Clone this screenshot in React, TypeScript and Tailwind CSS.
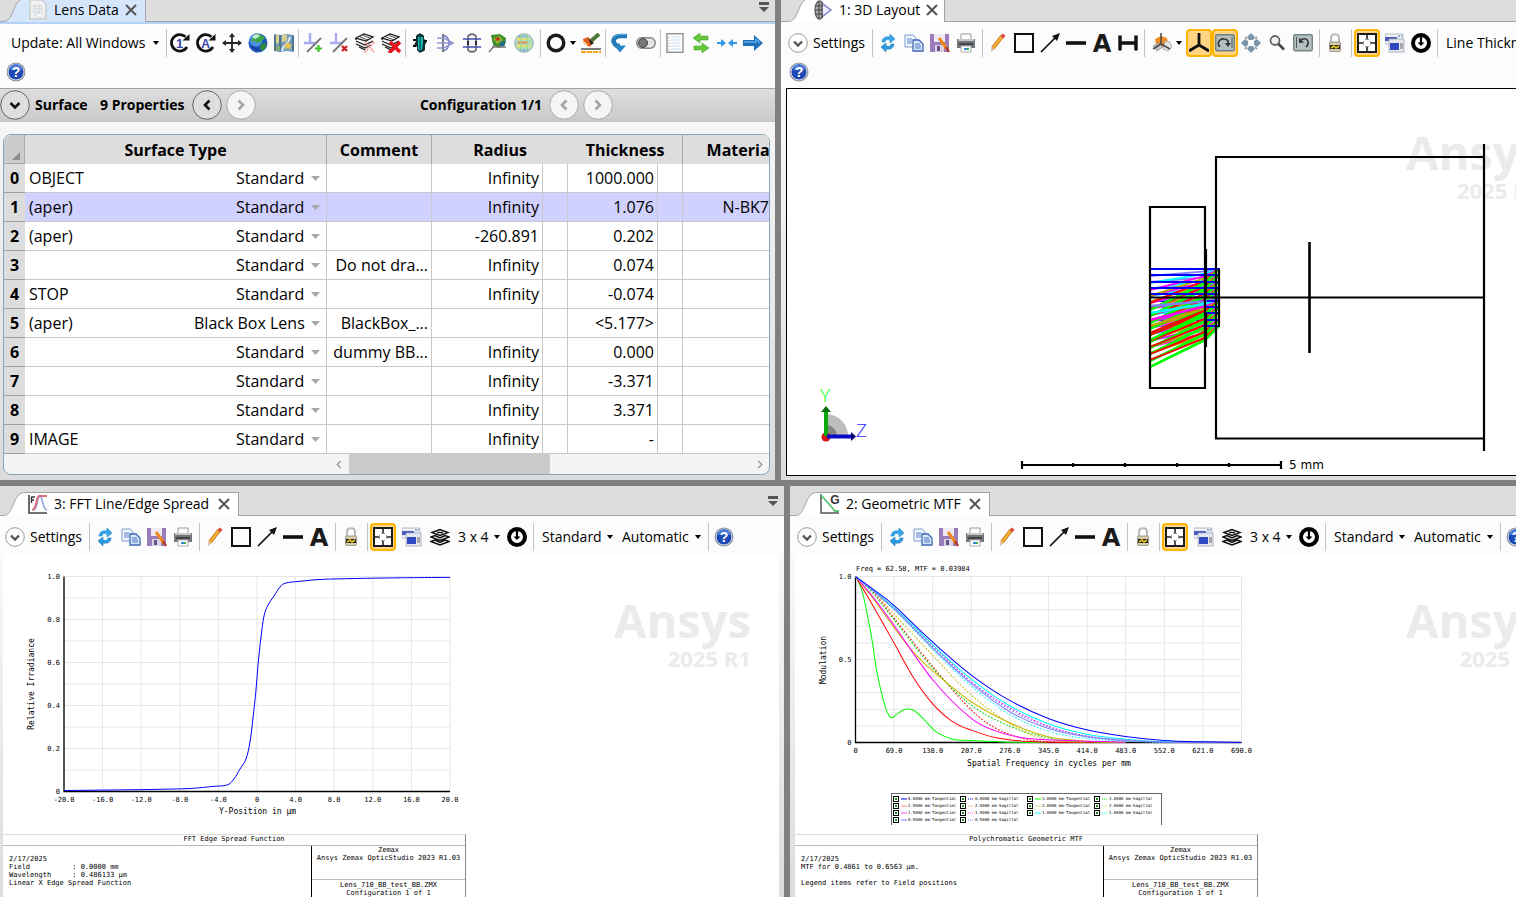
import React from 'react'
import clsx from 'clsx'

/* ---------- icons, all on a 20 x 20 grid ---------- */

const Svg = ({ children, className }: { children: React.ReactNode; className?: string }) => (
	<svg viewBox="0 0 20 20" className={clsx('w-5 h-5 shrink-0', className)} fill="none" aria-hidden="true">{children}</svg>
)

const Caret: React.FC<{ className?: string }> = ({ className }) => (
	<svg viewBox="0 0 6 4" className={clsx('w-[6px] h-1 pointer-events-none', className)} aria-hidden="true"><path d="M0 0h6L3 4z" fill="currentColor" /></svg>
)

const rotateRing = (
	<g>
		<path d="M17 14A8.300 8.300 0 1 1 15.500 3.800" stroke="#111" strokeWidth="2.800" />
		<path d="M12.500 7.500h7V1z" fill="#111" />
	</g>
)

const layers = (
	<g stroke="#1a1a1a" strokeWidth="1.300">
		<path d="M1 5l8-4 9 3-7 4z" fill="#fff" />
		<path d="M1 8l2 1 7 3 8-4M1 11l9 4 6-3M1 5v2M4 14l6 3" />
		<path d="M5 4l8 3M8 2.500l7 2.500" strokeWidth="0.800" />
	</g>
)

const axes = (
	<g>
		<path d="M1 10h13M7 0v10" stroke="#a9aaf0" strokeWidth="2.400" />
		<path d="M4 19L18 5" stroke="#777" strokeWidth="1.800" />
	</g>
)

const icons = {
	update1: (
		<Svg>
			{rotateRing}
			<text x="9.500" y="14.500" textAnchor="middle" className="font-['Liberation_Sans'] text-[13px] font-bold" fill="#3a46a8">1</text>
		</Svg>
	),
	updateAll: (
		<Svg>
			{rotateRing}
			<text x="9.500" y="14.500" textAnchor="middle" className="font-['Liberation_Sans'] text-[12px] font-bold" fill="#3a46a8">A</text>
		</Svg>
	),
	move: (
		<Svg>
			<path d="M10 2v16M2 10h16" stroke="#222" strokeWidth="1.800" />
			<path d="M10 0l3 4h-6zM10 20l3-4h-6zM0 10l4-3v6zM20 10l-4-3v6z" fill="#222" />
		</Svg>
	),
	globe: (
		<Svg>
			<circle cx="10" cy="10" r="9.500" fill="#1c57b8" />
			<circle cx="8" cy="7" r="6.500" fill="#4f94e4" />
			<path d="M9 1c3 0 7 2 8 5l-3 1-1 2-4 1-2-2-4 1c1-4 3-7 6-8z" fill="#3fa648" />
			<path d="M13 11l5-1c1 3-1 6-4 8l-2-3z" fill="#2f8a35" />
			<path d="M4 4c2-3 6-3 8-1L7 6z" fill="#c9f0d0" />
			<path d="M4 13c2 3 5 4 7 4" stroke="#1a3f92" strokeWidth="2" />
		</Svg>
	),
	map: (
		<Svg>
			<path d="M0 1l6 1 7-1 7 1v17l-7-1-7 1-6-1z" fill="#6f9cc0" />
			<path d="M2 1.500l3 .5v9l-3-1zM8 2l5-.500v6l-5 2z" fill="#d7d28c" />
			<path d="M8 18c0-6 7-6 8-14" stroke="#e9f1f6" strokeWidth="1.800" />
			<path d="M1 2v16M6 2v17M19 3v15" stroke="#3c5a74" strokeWidth="1.200" />
			<path d="M14 8l1.500 3 3 .5-2 2 .5 3-3-1.500-3 1.500.5-3-2-2 3-.5z" fill="#e8c25a" />
			<path d="M2 13h4v5H2z" fill="#86aa76" />
		</Svg>
	),
	axesAdd: (
		<Svg>
			{axes}
			<path d="M15.500 12v7M12 15.500h7" stroke="#3cc72b" strokeWidth="2.200" />
		</Svg>
	),
	axesDel: (
		<Svg>
			{axes}
			<path d="M13 13l5 5M18 13l-5 5" stroke="#d02424" strokeWidth="2.400" />
		</Svg>
	),
	layersHide: (
		<Svg>
			{layers}
			<path d="M10 9l9 10M19 9L9 20" stroke="#f2a0a0" strokeWidth="2.200" strokeDasharray="2 1" />
		</Svg>
	),
	layersDel: (
		<Svg>
			{layers}
			<path d="M9 9l10 10M19 9L8 20" stroke="#e8141c" strokeWidth="3.600" />
		</Svg>
	),
	element: (
		<Svg>
			<path d="M6 3c2-3 6-3 8 0v3l3 2-2 4v5c-3 3-6 3-8 0v-3l-3-2 2-4z" fill="#0e2f33" />
			<path d="M8 4h5v5l-1 8H8V9z" fill="#19b9b4" />
			<path d="M10 0v20" stroke="#08474a" strokeWidth="1.200" />
			<path d="M3 7h3M3 13h3M14 8h3" stroke="#111" strokeWidth="2" />
		</Svg>
	),
	lensHalf: (
		<Svg>
			<path d="M7 1v18" stroke="#444" strokeWidth="1.400" />
			<path d="M7 2c4 1 6 4 6 8s-2 7-6 8" stroke="#6a78bf" strokeWidth="1.300" />
			<path d="M1 5h7l9 5-9 5H1M1 10h16" stroke="#8e98d4" strokeWidth="1.500" />
		</Svg>
	),
	lensFull: (
		<Svg>
			<path d="M6 3c2-2.500 6-2.500 8 0v14c-2 2.500-6 2.500-8 0z" fill="#f4f4f4" stroke="#666" strokeWidth="1.600" />
			<path d="M1 6h18M1 14h18" stroke="#3f4fb4" strokeWidth="1.600" />
			<path d="M6 8v4M14 8v4" stroke="#222" strokeWidth="1.800" />
		</Svg>
	),
	surfacePlot: (
		<Svg>
			<path d="M3 2l9-1 6 4-1 7-6 3-6-3z" fill="#3f8f2c" />
			<path d="M5 5l7-2 3 4-6 4z" fill="#8db52b" />
			<path d="M7 5l4-1 1 3-3 1z" fill="#c8341c" />
			<path d="M12 9l6-1-2 5-4 1z" fill="#1f6d86" />
			<path d="M1 19l6-7M4 14h14" stroke="#777" strokeWidth="1.500" />
		</Svg>
	),
	wavefront: (
		<Svg>
			<circle cx="10" cy="10" r="9.300" fill="#a9dcc0" stroke="#9aa8b5" />
			<path d="M3 6h13M3 13h14" stroke="#ece35e" strokeWidth="2.400" strokeDasharray="3 1" />
			<path d="M4 10c3-2 6 1 10-1" stroke="#f07a4a" strokeWidth="1.600" />
			<path d="M4 3.500h10M6 17h9" stroke="#86a8ea" strokeWidth="2" strokeDasharray="2 1" />
			<path d="M7 2v16M13 2v16" stroke="#8fd687" strokeWidth="1" />
		</Svg>
	),
	aperture: <Svg><circle cx="10" cy="10" r="7.800" stroke="#1a1a1a" strokeWidth="3.400" /></Svg>,
	pickup: (
		<Svg>
			<path d="M18 1l-8 7" stroke="#4b7a35" strokeWidth="4" />
			<path d="M2 6l5-2 5 5-3 5-6-3z" fill="#e2641c" />
			<path d="M7 5l6 5-3 2z" fill="#222" />
			<path d="M2 9l4 3" stroke="#f8d9a8" strokeWidth="1.600" />
			<path d="M0 16h20" stroke="#222" strokeWidth="1.200" />
			<path d="M0 19h20" stroke="#f0a81e" strokeWidth="2" strokeDasharray="5 1" />
		</Svg>
	),
	undo: (
		<Svg>
			<path d="M17 3H10C4 3 2 8 5 11c1 2 3 2 5 2" stroke="#2279b8" strokeWidth="4.600" />
			<path d="M4 12.500h12l-6 7z" fill="#2b86c6" />
			<path d="M16 1.500h-6c-4 0-6 2-6.500 4" stroke="#5fb0e4" strokeWidth="1" />
		</Svg>
	),
	toggle: (
		<Svg>
			<rect x="0.800" y="4.800" width="18.400" height="10.400" rx="5" fill="#e4e4e4" stroke="#888" strokeWidth="1.500" />
			<circle cx="7" cy="10" r="4.500" fill="#777" stroke="#444" />
		</Svg>
	),
	notes: (
		<Svg>
			<rect x="2" y="0.700" width="16" height="18.600" fill="#fff" stroke="#8f8f8f" strokeWidth="1.400" />
			<path d="M6 4h10M6 7h10M6 10h10M6 13h10M6 16h10" stroke="#c6dbee" />
			<path d="M4 4v13" stroke="#999" strokeDasharray="1 2" />
		</Svg>
	),
	swap: (
		<Svg>
			<path d="M2 5l7-5v3h8v4H9v3zM18 15l-7-5v3H3v4h8v3z" fill="#63c83e" stroke="#4aa52c" strokeWidth="0.600" />
		</Svg>
	),
	inward: (
		<Svg>
			<path d="M0 9h4V6l5 4-5 4v-3H0zM20 9h-4V6l-5 4 5 4v-3h4z" fill="#2f96e8" />
		</Svg>
	),
	goRight: (
		<Svg>
			<path d="M0 7h11V2l9 8-9 8v-5H0z" fill="#1f6fb8" />
			<path d="M1 9h12V6l4 4" stroke="#58aef0" strokeWidth="1.300" />
		</Svg>
	),
	help: (
		<Svg>
			<circle cx="10" cy="10" r="9.500" fill="#8d939c" />
			<circle cx="10" cy="10" r="8" fill="#1f49b4" stroke="#d5dcec" strokeWidth="1" />
			<path d="M4 8a6 6 0 0 1 12 0z" fill="#4b78da" />
			<text x="10" y="15" textAnchor="middle" className="font-['Liberation_Sans'] text-[14px] font-bold" fill="#fff">?</text>
		</Svg>
	),
	refresh: (
		<Svg>
			<path d="M4 9c0-4 4-6 8-5V1l5 5-5 4V7c-3-1-5 0-5 2z" fill="#35a7e8" stroke="#2488cc" strokeWidth="0.600" />
			<path d="M16 11c0 4-4 6-8 5v3l-5-5 5-4v3c3 1 5 0 5-2z" fill="#2c9be0" stroke="#1e7cc0" strokeWidth="0.600" />
		</Svg>
	),
	copy: (
		<Svg>
			<path d="M1 2h8l3 3v9H1z" fill="#f1f6fd" stroke="#7e9cd0" />
			<path d="M3 6h5M3 8h5M3 10h5" stroke="#5f86cf" />
			<path d="M9 7h6l4 4v7H9z" fill="#dbe8fa" stroke="#3d66b5" strokeWidth="1.300" />
			<path d="M11 11h5M11 13h6M11 15h6" stroke="#4a76c8" />
		</Svg>
	),
	save: (
		<Svg>
			<path d="M0 1h19v18H0z" fill="#9a7cba" />
			<path d="M4 1h11v8H4z" fill="#efeaf5" />
			<path d="M5 12h9v7H5z" fill="#d8d3de" />
			<path d="M7 13h3v5H7z" fill="#6b4f8c" />
			<path d="M9 5l8 11" stroke="#f08a1c" strokeWidth="3" />
			<path d="M16 14l3 5" stroke="#b02c1c" strokeWidth="2" />
		</Svg>
	),
	print: (
		<Svg>
			<path d="M5 1h10v6H5z" fill="#fff" stroke="#999" />
			<path d="M1 6h18v9H1z" fill="#73777b" />
			<path d="M2 6h16v2H2z" fill="#c3c6c8" />
			<path d="M3 11h14" stroke="#333" strokeWidth="1.500" />
			<path d="M5 13h10v6H5z" fill="#fff" stroke="#aaa" />
			<path d="M8 15h3v2H8z" fill="#2f8ad0" />
			<path d="M11 15h2v2h-2z" fill="#49b04a" />
		</Svg>
	),
	pencil: (
		<Svg>
			<path d="M5 15L14 3.500" stroke="#c77a12" strokeWidth="4" />
			<path d="M5 15L14 3.500" stroke="#f7b03a" strokeWidth="2.400" />
			<path d="M12.500 3l2-2.500 3 2-2 3z" fill="#d8473a" />
			<path d="M3 19l.500-5 3 2z" fill="#d8b489" />
		</Svg>
	),
	rect: <Svg><rect x="1" y="1" width="18" height="18" stroke="#111" strokeWidth="2" /></Svg>,
	arrow: (
		<Svg>
			<path d="M1 19L16 4" stroke="#111" strokeWidth="1.700" />
			<path d="M20 0l-3 8-5-5z" fill="#111" />
		</Svg>
	),
	line: <Svg><path d="M0 10h20" stroke="#111" strokeWidth="3.600" /></Svg>,
	text: (
		<Svg>
			<text x="10" y="18.500" textAnchor="middle" className="font-['DejaVu_Sans'] text-[24px] font-bold" fill="#1a1a1a">A</text>
		</Svg>
	),
	dimension: <Svg><path d="M2 2.500v15M18 2.500v15M2 10h16" stroke="#111" strokeWidth="3.400" /></Svg>,
	cube: (
		<Svg>
			<path d="M3 6l6-3 6 2 1 5-5 4-7-2z" fill="#f08a24" />
			<path d="M1 13l6-3 4 4-6 4z" fill="#c4c4c4" stroke="#888" strokeWidth="0.700" />
			<path d="M13 8l5 1 2 5-4 4-5-2z" fill="#e2e2e2" stroke="#999" strokeWidth="0.700" />
			<path d="M9 0v11l9 5M9 11l-8 5" stroke="#4a4a4a" strokeWidth="1.500" />
		</Svg>
	),
	triad: <Svg><path d="M10 0v13M10 12L0 18M10 12l10 6" stroke="#111" strokeWidth="2.800" /></Svg>,
	rotateView: (
		<Svg>
			<rect x="0.700" y="1.700" width="18.600" height="16" rx="1.500" fill="#b3bfbf" stroke="#6f8080" strokeWidth="1.400" />
			<path d="M5 14c-4-4 0-9 4-8 3 0 5 2 4 5" stroke="#333" strokeWidth="1.600" />
			<path d="M10 10h6l-3 4z" fill="#333" />
			<path d="M17 4v11" stroke="#555" />
		</Svg>
	),
	pan: (
		<Svg>
			<path d="M10 0l4 4-2 3H8L6 4zM10 20l4-4-2-3H8l-2 3zM0 10l4-4 3 2v4l-3 2zM20 10l-4-4-3 2v4l3 2z" fill="#7d95a8" />
			<path d="M4 4l2 2M16 4l-2 2M4 16l2-2M16 16l-2-2" stroke="#7f8f9e" strokeWidth="1.400" />
			<circle cx="10" cy="10" r="2.500" fill="#fff" />
		</Svg>
	),
	zoom: (
		<Svg>
			<circle cx="8" cy="7.500" r="4.500" fill="#f1f1f1" stroke="#666" strokeWidth="1.800" />
			<path d="M11.500 11l5.500 5.500" stroke="#444" strokeWidth="2.600" />
		</Svg>
	),
	resetView: (
		<Svg>
			<rect x="0.700" y="1.700" width="18.600" height="16" rx="1.500" fill="#b4c0c0" stroke="#738484" strokeWidth="1.400" />
			<path d="M8 7c5-4 10 2 5 7" stroke="#333" strokeWidth="1.600" />
			<path d="M6 10V4.500l5 5z" fill="#333" />
			<path d="M3.500 4v11" stroke="#555" />
		</Svg>
	),
	lock: (
		<Svg>
			<path d="M6 9V5c0-5 8-5 8 0v4" stroke="#b9b9b9" strokeWidth="2" />
			<rect x="4.500" y="9" width="11" height="9.500" rx="1" fill="#d4cda6" stroke="#888" strokeWidth="0.800" />
			<path d="M5 12h10v4H5z" fill="#222" />
			<path d="M6 15l3-2 2 2 3-2" stroke="#f2cf1a" strokeWidth="1.600" />
		</Svg>
	),
	fitWindow: (
		<Svg>
			<rect x="1" y="1" width="18" height="18" fill="#fff" stroke="#1c1c1c" strokeWidth="2" />
			<path d="M10 2v4.500M10 13.500V18M2 10h4.500M13.500 10H18" stroke="#222" strokeWidth="1.600" />
			<path d="M8 6.500h4M8 13.500h4M6.500 8v4M13.500 8v4" stroke="#999" />
		</Svg>
	),
	windows: (
		<Svg>
			<path d="M0 1h18v10H0z" fill="#eef1f8" stroke="#a5aec0" strokeWidth="0.800" />
			<path d="M0 4h12v4H0z" fill="#4a5cc0" />
			<path d="M13 3h2M16 3h1" stroke="#7f98b8" strokeWidth="1.500" />
			<path d="M4 6h15v13H4z" fill="#e6e9f0" stroke="#9aa1ad" strokeWidth="0.800" />
			<path d="M5 10h9v7H5z" fill="#2f49c0" />
			<path d="M15 10h3v6h-3z" fill="#a8a8a8" />
		</Svg>
	),
	clock: (
		<Svg>
			<circle cx="10" cy="10" r="8" fill="#fff" stroke="#000" strokeWidth="4" />
			<path d="M10 4v7" stroke="#000" strokeWidth="2.200" />
			<path d="M6.500 9.500L10 13l3.500-3.500z" fill="#000" />
		</Svg>
	),
	stack: (
		<Svg>
			<path d="M2 5.500l8-3 8 3-8 3zM1 10l4-1.500L10 11l5-2.500L19 10l-9 3.500zM1 14.500L5 13l5 2.500 5-2.500 4 1.500L10 18z" stroke="#111" strokeWidth="1.500" />
			<path d="M7 5.500h6" stroke="#111" strokeWidth="1.500" />
		</Svg>
	),
	doc: (
		<Svg>
			<path d="M2 0h12l4 4v15H2z" fill="#f2f2f2" stroke="#bdbdbd" />
			<path d="M4 6h11M4 9h11M4 12h11M7 4v12M11 4v12" stroke="#d0d5da" />
			<path d="M8 17c0-3 3-4 5-2 2-1 4 0 4 2z" fill="#fff" stroke="#c4cdd6" strokeWidth="0.600" />
		</Svg>
	),
	lensTab: (
		<Svg>
			<ellipse cx="6.500" cy="10" rx="4.500" ry="9.200" fill="#a8a8a8" stroke="#555" strokeWidth="1.200" />
			<path d="M6 1v18M2 6h8M2 14h8M2 10h8M9 2v16" stroke="#444" />
			<path d="M10 4l8 6-8 6" fill="#eef0ff" stroke="#8c90d8" strokeWidth="1.600" />
		</Svg>
	),
	fftTab: (
		<Svg>
			<path d="M1 1v18h18" stroke="#444" strokeWidth="1.600" />
			<path d="M3 3h4M3.500 3v6M3 6h3" stroke="#333" strokeWidth="1.400" />
			<path d="M6 16c3 0 3-13 6-14 3 0 2 13 7 14" stroke="#9aaee4" strokeWidth="1.800" />
			<path d="M4 16c5 0 4-14 7-14h8" stroke="#dc6c78" strokeWidth="2" />
		</Svg>
	),
	mtfTab: (
		<Svg>
			<path d="M1 0v19h18" stroke="#555" strokeWidth="1.500" />
			<path d="M1 1l14 16h4" stroke="#5cc47a" strokeWidth="1.800" />
			<text x="15" y="10" textAnchor="middle" className="font-['Liberation_Sans'] text-[12px] font-bold" fill="#333">G</text>
		</Svg>
	),
}

type IconName = keyof typeof icons

/* ---------- shared controls ---------- */

const ToolButton: React.FC<{ icon: IconName; active?: boolean }> = ({ icon, active }) => (
	<button
		aria-label={icon}
		className={clsx('w-[26px] h-7 shrink-0 flex items-center justify-center rounded-sm', active && 'bg-[#ffd484] border-2 border-[#ffb400]')}
	>
		{icons[icon]}
	</button>
)

const ToolGroup: React.FC<{ list: IconName[] }> = ({ list }) => <>{list.map((i) => <ToolButton key={i} icon={i} />)}</>

const Sep: React.FC<{ narrow?: boolean }> = ({ narrow }) => (
	<div className={clsx('h-7 shrink-0 flex justify-center', narrow ? 'w-[3px]' : 'w-[6px]')}>
		<div className="w-px bg-[#c4c4c4]"></div>
	</div>
)

const ToolSelect: React.FC<{ label: string; value: string; className: string }> = ({ label, value, className }) => (
	<label className={clsx('grid items-center shrink-0', className)}>
		<select aria-label={label} className="col-start-1 row-start-1 w-full appearance-none bg-transparent outline-none">
			<option>{value}</option>
		</select>
		<Caret className="col-start-1 row-start-1 justify-self-end" />
	</label>
)

const SettingsButton: React.FC = () => (
	<button className="flex items-center shrink-0 w-[81px] gap-[5px] text-left">
		<svg viewBox="0 0 20 20" className="w-5 h-5 shrink-0" fill="none" aria-hidden="true">
			<circle cx="10" cy="10" r="9.300" fill="#fff" stroke="#999" />
			<path d="M6 8.500l4 4 4-4" stroke="#555" strokeWidth="2.400" />
		</svg>
		Settings
	</button>
)

type TabBarProps = { title: string; icon: IconName; indent?: string; width: string; blue?: boolean; menu?: boolean; top?: boolean }

const TabBar: React.FC<TabBarProps> = ({ title, icon, indent, width, blue, menu, top }) => (
	<div className={clsx('flex items-end overflow-hidden bg-[#dddddd] shrink-0', top ? 'h-[22px]' : 'h-[30px]')}>
		<div className={clsx('shrink-0 self-stretch border-b border-[#a3a3a3]', indent ?? 'w-0')}></div>
		<div className={clsx('h-6 shrink-0 flex items-center', width)}>
			<svg viewBox="0 0 28 24" className="w-7 h-6 shrink-0" aria-hidden="true">
				<path d="M0 24V23.500H3C9 23.500 11 18 14 11S19 .5 26 .5H28V24z" fill={blue ? '#d5e5fa' : '#ffffff'} />
				<path d="M0 23.500H3C9 23.500 11 18 14 11S19 .5 26 .5H28" fill="none" stroke="#a3a3a3" />
			</svg>
			<div className={clsx('flex-1 h-full min-w-0 flex items-center gap-[6px] border-t border-r border-[#a3a3a3] pr-2 pb-[2px]', blue ? 'bg-[#d5e5fa]' : 'bg-white')}>
				{icons[icon]}
				<span className="whitespace-nowrap">{title}</span>
				<button aria-label="Close" className="ml-auto shrink-0">
					<svg viewBox="0 0 12 12" className="w-3 h-3" aria-hidden="true"><path d="M1 1l10 10M11 1L1 11" stroke="#555" strokeWidth="2" /></svg>
				</button>
			</div>
		</div>
		<div className="flex-1 self-stretch flex justify-end items-center pr-[5px] border-b border-[#a3a3a3]">
			{menu && (
				<button aria-label="Window list" className={clsx(top ? 'pb-2' : 'pt-px')}>
					<svg viewBox="0 0 12 12" className="w-3 h-3" aria-hidden="true"><path d="M1 1h10v3H1zM1 6h10l-5 5z" fill="#555" /></svg>
				</button>
			)}
		</div>
	</div>
)

const RoundButton: React.FC<{ label: string; d: string; disabled?: boolean }> = ({ label, d, disabled }) => (
	<button aria-label={label} disabled={disabled} className="shrink-0">
		<svg viewBox="0 0 30 30" className="w-[30px] h-[30px]" fill="none" aria-hidden="true">
			<circle cx="15" cy="15" r="14.300" fill={disabled ? '#f5f5f5' : '#dedede'} stroke={disabled ? '#aaaaaa' : '#666666'} />
			<path d={d} stroke={disabled ? '#a5a5a5' : '#111111'} strokeWidth="2.600" />
		</svg>
	</button>
)

const LEFT = 'M17.500 10.500l-4.500 4.500 4.500 4.500'
const RIGHT = 'M12.500 10.500l4.500 4.500-4.500 4.500'
const DOWN = 'M10.500 13l4.500 4.500 4.500-4.500'

/* ---------- lens data editor ---------- */

type Row = { label?: string; type?: string; comment?: string; radius?: string; thickness: string; material?: string }

const rows: Row[] = [
	{ label: 'OBJECT', radius: 'Infinity', thickness: '1000.000' },
	{ label: '(aper)', radius: 'Infinity', thickness: '1.076', material: 'N-BK7' },
	{ label: '(aper)', radius: '-260.891', thickness: '0.202' },
	{ comment: 'Do not dra...', radius: 'Infinity', thickness: '0.074' },
	{ label: 'STOP', radius: 'Infinity', thickness: '-0.074' },
	{ label: '(aper)', type: 'Black Box Lens', comment: 'BlackBox_...', thickness: '<5.177>' },
	{ comment: 'dummy BB...', radius: 'Infinity', thickness: '0.000' },
	{ radius: 'Infinity', thickness: '-3.371' },
	{ radius: 'Infinity', thickness: '3.371' },
	{ label: 'IMAGE', radius: 'Infinity', thickness: '-' },
]

const cell = 'h-[29px] p-0 border-b border-r border-[#c8c8c8] whitespace-nowrap'
const head = 'h-[29px] p-0 pt-px border-[#a8a8a8] font-bold'

const LensTable: React.FC = () => (
	<div className="rounded-lg border border-[#8aa3b5] overflow-hidden bg-[#f4f4f4] text-[16px] leading-[28px]">
		<table className="table-fixed border-separate border-spacing-0 w-[794px] bg-white">
			<colgroup>
				<col className="w-[21px]" />
				<col className="w-[302px]" />
				<col className="w-[105px]" />
				<col className="w-[111px]" />
				<col className="w-[25px]" />
				<col className="w-[90px]" />
				<col className="w-[25px]" />
				<col className="w-[90px]" />
				<col className="w-[25px]" />
			</colgroup>
			<thead className="bg-[#dddddd]">
				<tr>
					<th className={clsx(head, 'border-r border-b bg-[#cccccc]')}>
						<svg viewBox="0 0 8 8" className="w-2 h-2 ml-auto mt-3 mr-1" aria-hidden="true"><path d="M8 0v8H0z" fill="#8c8c8c" /></svg>
					</th>
					<th className={clsx(head, 'border-r')}>Surface Type</th>
					<th className={clsx(head, 'border-r')}>Comment</th>
					<th className={head} colSpan={2}>Radius</th>
					<th className={clsx(head, 'border-r')} colSpan={2}>Thickness</th>
					<th className={head} colSpan={2}>Material</th>
				</tr>
			</thead>
			<tbody>
				{rows.map((r, i) => (
					<tr key={i} className={i === 1 ? 'bg-[#d1d1ff]' : ''}>
						<th className="h-[29px] p-0 bg-[#dddddd] border-b border-[#a0a0a0] font-bold">{i}</th>
						<td className={cell}>
							<div className="flex justify-between pl-1 pr-[6px]">
								<span>{r.label}</span>
								<label className="flex items-center gap-[6px]">
									<select aria-label={`Surface ${i} type`} className="appearance-none bg-transparent outline-none">
										<option>{r.type ?? 'Standard'}</option>
									</select>
									<svg viewBox="0 0 9 5" className="w-[9px] h-[5px]" aria-hidden="true"><path d="M0 0h9L4.500 5z" fill="#a8a8a8" /></svg>
								</label>
							</div>
						</td>
						<td className={clsx(cell, 'text-right pr-[3px]')}>{r.comment}</td>
						<td className={clsx(cell, 'text-right pr-[3px]')}>{r.radius}</td>
						<td className={cell}></td>
						<td className={clsx(cell, 'text-right pr-[3px]')}>{r.thickness}</td>
						<td className={cell}></td>
						<td className={clsx(cell, 'text-right pr-[3px]')}>{r.material}</td>
						<td className={cell}></td>
					</tr>
				))}
			</tbody>
		</table>
		<div className="flex h-5 items-center pl-[332px]">
			<button aria-label="Scroll left" className="w-[13px]">
				<svg viewBox="0 0 6 10" className="w-[6px] h-[9px]" fill="none" aria-hidden="true"><path d="M5 1L1 5l4 4" stroke="#999" strokeWidth="1.500" /></svg>
			</button>
			<div className="w-[201px] h-full bg-[#cbcbcb]"></div>
			<button aria-label="Scroll right" className="ml-auto w-3">
				<svg viewBox="0 0 6 10" className="w-[6px] h-[9px]" fill="none" aria-hidden="true"><path d="M1 1l4 4-4 4" stroke="#999" strokeWidth="1.500" /></svg>
			</button>
		</div>
	</div>
)

const LensData: React.FC = () => (
	<section className="min-w-0 overflow-hidden flex flex-col bg-linear-to-b from-white to-[#dcdcdc]">
		<TabBar title="Lens Data" icon="doc" width="w-[146px]" blue menu top />
		<div className="bg-[#fcfcfc] border-t-2 border-t-[#b3d2f8] border-b border-b-[#a3a3a3] pt-1 pb-[2px]">
			<div className="flex items-center h-[29px]">
				<ToolSelect label="Update" value="Update: All Windows" className="w-[148px] ml-[11px]" />
				<div className="w-[7px] shrink-0"></div>
				<div className="w-px h-7 bg-[#c4c4c4] shrink-0"></div>
				<ToolGroup list={['update1', 'updateAll', 'move', 'globe', 'map']} />
				<Sep narrow />
				<ToolGroup list={['axesAdd', 'axesDel', 'layersHide', 'layersDel']} />
				<Sep narrow />
				<ToolGroup list={['element', 'lensHalf', 'lensFull', 'surfacePlot', 'wavefront']} />
				<Sep />
				<button aria-label="Aperture" className="w-[35px] shrink-0 flex items-center gap-1 pl-[3px]">{icons.aperture}<Caret /></button>
				<ToolGroup list={['pickup']} />
				<Sep narrow />
				<ToolGroup list={['undo', 'toggle']} />
				<Sep narrow />
				<ToolGroup list={['notes', 'swap', 'inward', 'goRight']} />
			</div>
			<div className="flex items-center h-[29px] pl-[3px]"><ToolButton icon="help" /></div>
		</div>
		<div className="flex items-center h-[33px] pb-px bg-linear-to-b from-[#dedede] to-[#c9c9c9] font-bold whitespace-nowrap">
			<RoundButton label="Expand" d={DOWN} />
			<span className="w-[65px] pl-[5px]">Surface</span>
			<span className="w-[97px] pl-[5px]">9 Properties</span>
			<div className="flex gap-1">
				<RoundButton label="Previous surface" d={LEFT} />
				<RoundButton label="Next surface" d={RIGHT} disabled />
			</div>
			<span className="w-[293px] pr-[7px] text-right">Configuration 1/1</span>
			<div className="flex gap-1">
				<RoundButton label="Previous configuration" d={LEFT} disabled />
				<RoundButton label="Next configuration" d={RIGHT} disabled />
			</div>
		</div>
		<div className="pt-3 pl-[3px] pr-[5px] pb-[5px]">
			<LensTable />
		</div>
	</section>
)

/* ---------- 3D layout ---------- */

const rayColors = ['#00ff00', '#ff0000', '#b9a800', '#ff00ff', '#00ffff', '#7f7fff']
const rayOffsets = [41, 34, 27, 21, 14, 7]
const stopHeights = [269, 275, 282, 288, 294, 301, 307, 313, 320, 326]

const Ray: React.FC<{ field: number; y: number; bold?: boolean }> = ({ field, y, bold }) => {
	const off = rayOffsets[field]
	return <path d={`M1150 ${y + off}L1205 ${y + off * 0.34}L1219 ${y}`} stroke={rayColors[field]} strokeWidth={bold || field === 0 ? 2.4 : 2} />
}

const BlueRay: React.FC<{ y: number; from?: number }> = ({ y, from = 1150 }) => <path d={`M${from} ${y}H1220`} stroke="#0000ff" strokeWidth="2" />

const Layout3D: React.FC = () => (
	<svg viewBox="787 89 729 386" preserveAspectRatio="xMinYMin slice" className="block w-full h-[386px]" fill="none" role="img" aria-label="3D layout">
		<g fill="#ebebeb" className="font-['Open_Sans'] font-bold">
			<text x="1406" y="170" className="text-[47px]">Ansys</text>
			<text x="1457" y="199" className="text-[22px]">2025 R1</text>
		</g>
		{stopHeights.slice(5).map((y) => <BlueRay key={y} y={y} />)}
		{[5, 4, 3, 2, 0, 1].map((f) => stopHeights.map((y) => <Ray key={`${y}-${f}`} field={f} y={y} />))}
		{stopHeights.map((y) => <Ray key={y} field={0} y={y} />)}
		{stopHeights.slice(5).map((y) => <path key={y} d={`M1150 ${y + 34}L1205 ${y + 12}`} stroke="#ff0000" strokeWidth="1.400" />)}
		{[0, 1, 2, 3, 4, 5].map((f) => <Ray key={f} field={f} y={299} bold />)}
		{stopHeights.slice(0, 5).map((y) => <BlueRay key={y} y={y} />)}
		{stopHeights.slice(5).map((y, i) => <BlueRay key={y} y={y} from={1207 - i} />)}
		<g stroke="#000" strokeWidth="2.200">
			<path d="M1484 157H1216V438.500H1484" />
			<path d="M1484 144V451" />
			<path d="M1150 207H1205V388H1150z" />
			<path d="M1206 249V297M1206 313V347M1150 297.500H1484M1219 269V327" />
			<path d="M1309.500 242V353" strokeWidth="2.600" />
			<path d="M1022 465H1281M1022 461v8M1281 461v8" />
			<path d="M1073 463v4M1125 463v4M1177 463v4M1229 463v4" />
		</g>
		<text x="1289" y="469" fill="#000" className="font-['DejaVu_Sans'] text-[12px]">5 mm</text>
		<path d="M826 414a22 22 0 0 1 22 22H826z" fill="#bdbdbd" />
		<path d="M826 425a11 11 0 0 1 11 11H826z" fill="#858585" />
		<circle cx="826" cy="437" r="4.500" fill="#d21414" />
		<path d="M826 436V411" stroke="#0aa80a" strokeWidth="4" />
		<path d="M821 412l5-6 5 6z" fill="#067006" />
		<path d="M827 436.500H851" stroke="#0a0ac8" strokeWidth="4" />
		<path d="M851 432l5 4.500-5 4.500z" fill="#050578" />
		<text x="820" y="402" fill="#00ff00" className="font-['Open_Sans'] font-light text-[19px]">Y</text>
		<text x="856" y="437" fill="#2a2aff" className="font-['Open_Sans'] font-light text-[19px]">Z</text>
	</svg>
)

const LayoutPanel: React.FC = () => (
	<section className="min-w-0 overflow-hidden flex flex-col bg-linear-to-b from-white to-[#dcdcdc]">
		<TabBar title="1: 3D Layout" icon="lensTab" indent="w-1" width="w-[160px]" top />
		<div className="bg-[#fcfcfc] pt-[6px] pb-[2px] pl-[7px]">
			<div className="flex items-center h-[29px] whitespace-nowrap">
				<SettingsButton />
				<Sep />
				<ToolGroup list={['refresh', 'copy', 'save', 'print']} />
				<Sep />
				<ToolGroup list={['pencil', 'rect', 'arrow', 'line', 'text', 'dimension']} />
				<Sep />
				<button aria-label="View" className="w-[39px] shrink-0 flex items-center gap-1 pl-[5px]">{icons.cube}<Caret /></button>
				<ToolButton icon="triad" active />
				<ToolButton icon="rotateView" active />
				<ToolGroup list={['pan', 'zoom', 'resetView']} />
				<Sep />
				<ToolGroup list={['lock']} />
				<Sep />
				<ToolButton icon="fitWindow" active />
				<div className="flex pl-[2px]"><ToolGroup list={['windows', 'clock']} /></div>
				<Sep />
				<button className="pl-[6px]">Line Thickness</button>
			</div>
			<div className="flex items-center h-[29px] -ml-[2px]"><ToolButton icon="help" /></div>
		</div>
		<div className="ml-[5px] border border-r-0 border-black bg-white">
			<Layout3D />
		</div>
	</section>
)

/* ---------- plots ---------- */

type Pt = [number, number]

// Catmull-Rom through the points, written as cubic segments
const smooth = (pts: Pt[]) => {
	let d = `M${pts[0][0]} ${pts[0][1]}`
	for (let i = 0; i < pts.length - 1; i++) {
		const p0 = pts[Math.max(i - 1, 0)]
		const p1 = pts[i]
		const p2 = pts[i + 1]
		const p3 = pts[Math.min(i + 2, pts.length - 1)]
		d += `C${p1[0] + (p2[0] - p0[0]) / 6} ${p1[1] + (p2[1] - p0[1]) / 6} ${p2[0] - (p3[0] - p1[0]) / 6} ${p2[1] - (p3[1] - p1[1]) / 6} ${p2[0]} ${p2[1]}`
	}
	return d
}

type PlotProps = { x: number; y: number; w: number; h: number; xLabels: string[]; yLabels: string[]; children?: React.ReactNode }

const Plot: React.FC<PlotProps> = ({ x, y, w, h, xLabels, yLabels, children }) => {
	const lines = [0, 1, 2, 3, 4, 5, 6, 7, 8, 9, 10]
	return (
		<g className="font-['DejaVu_Sans_Mono','Liberation_Mono',monospace] text-[7px]">
			<g stroke="#e6e6e6">
				{lines.map((i) => <path key={i} d={`M${x + (w * i) / 10} ${y}v${h}M${x} ${y + (h * i) / 10}h${w}`} />)}
			</g>
			<path d={`M${x} ${y}v${h}h${w}`} stroke="#000" strokeWidth="1.300" fill="none" />
			{xLabels.map((t, i) => <text key={t} x={x + (w * i) / 10} y={y + h + 10} textAnchor="middle">{t}</text>)}
			{yLabels.map((t, i) => <text key={t} x={x - 4} y={y + (h * i) / (yLabels.length - 1) + 2} textAnchor="end">{t}</text>)}
			{children}
		</g>
	)
}

const edgeCurve: Pt[] = [
	[64, 790.5], [110, 790], [150, 789.5], [190, 788.5], [212, 786.5], [227, 785], [234, 779], [240, 769], [246, 759], [250, 742],
	[253, 718], [256, 690], [258, 665], [261, 637], [264, 616], [268, 605], [274, 596], [280, 587], [286, 583], [300, 581.3],
	[320, 579.5], [350, 578.6], [400, 577.8], [450, 577.4],
]

// [colour, dotted, points on the plot grid]
const mtfCurves: [string, boolean, Pt[]][] = [
	['#00ff00', false, [[198, 65], [210, 88], [222, 125], [245, 240], [262, 350], [280, 430], [295, 475], [308, 488], [325, 475], [350, 462], [375, 467], [405, 495], [440, 530], [490, 552], [545, 556], [600, 558], [660, 561], [776, 562]]],
	['#ff0000', false, [[198, 65], [250, 152], [314, 265], [370, 365], [430, 447], [490, 500], [545, 525], [620, 548], [700, 558], [776, 561], [1007, 562]]],
	['#ff0000', true, [[198, 65], [250, 110], [314, 190], [430, 335], [545, 465], [620, 520], [700, 550], [776, 560], [891, 562]]],
	['#00d800', true, [[198, 65], [250, 115], [314, 195], [430, 340], [545, 450], [660, 513], [776, 548], [891, 560], [1007, 562]]],
	['#c8b800', false, [[198, 65], [250, 130], [314, 218], [370, 290], [430, 348], [545, 440], [660, 503], [776, 545], [891, 558], [1007, 562]]],
	['#c8b800', true, [[198, 65], [250, 108], [314, 178], [430, 302], [545, 420], [660, 505], [740, 545], [820, 558], [891, 562]]],
	['#ff00ff', false, [[198, 65], [250, 126], [314, 212], [430, 375], [545, 490], [620, 528], [700, 548], [776, 554], [891, 558], [1007, 561]]],
	['#ff00ff', true, [[198, 65], [314, 160], [430, 272], [545, 380], [660, 458], [776, 513], [891, 543], [1007, 557], [1123, 561]]],
	['#00ffff', false, [[198, 65], [314, 158], [430, 270], [545, 372], [660, 452], [776, 506], [891, 537], [1007, 552], [1123, 560], [1355, 562]]],
	['#00ffff', true, [[198, 65], [314, 164], [430, 284], [545, 393], [660, 478], [776, 528], [891, 550], [1007, 558], [1123, 562]]],
	['#7f7fff', false, [[198, 65], [314, 163], [430, 280], [545, 386], [660, 470], [776, 520], [891, 545], [1007, 556], [1123, 561], [1355, 562]]],
	['#7f7fff', true, [[198, 65], [314, 161], [430, 276], [545, 381], [660, 463], [776, 516], [891, 542], [1007, 554], [1123, 560]]],
	['#0000ff', false, [[198, 65], [256, 107], [314, 152], [430, 262], [545, 360], [660, 436], [776, 490], [891, 524], [1007, 544], [1123, 556], [1240, 560], [1355, 562]]],
]

const legend: [string, string][] = [
	['0.0000', '#0000ff'], ['3.0000', '#00ff00'], ['2.5000', '#ff8080'], ['2.0000', '#dcd480'],
	['1.5000', '#ff50ff'], ['1.0000', '#00ffff'], ['0.5000', '#7f7fff'],
]

const Legend: React.FC = () => (
	<div className="ml-24 w-[271px] h-8 shrink-0 grid grid-cols-4 auto-rows-[7px] gap-x-px px-px pt-px border border-b-0 border-[#666] font-['DejaVu_Sans_Mono','Liberation_Mono',monospace] text-[4px] leading-[7px]">
		{legend.map(([field, color]) => ['Tangential', 'Sagittal'].map((kind) => (
			<label key={field + kind} className="flex items-center gap-px whitespace-nowrap overflow-hidden">
				<input type="checkbox" defaultChecked className="appearance-none w-[6px] h-[6px] p-px shrink-0 border border-black bg-clip-content checked:bg-[#1c8a1c]" />
				<svg viewBox="0 0 7 2" className="w-[7px] h-[2px] shrink-0" aria-hidden="true">
					<path d="M1 1h6" stroke={color} strokeDasharray={kind === 'Sagittal' ? '1 1' : undefined} />
				</svg>
				{field} mm-{kind}
			</label>
		)))}
	</div>
)

const Watermark: React.FC = () => (
	<div className="pt-10 pl-[148px] flex flex-col items-end text-[#ebebeb] font-bold whitespace-nowrap select-none">
		<div className="text-[47px] leading-[52px]">Ansys</div>
		<div className="text-[22px] leading-6">2025 R1</div>
	</div>
)

const InfoBlock: React.FC<{ title: string; lines: string[] }> = ({ title, lines }) => (
	<div className="w-[463px] shrink-0 border-t border-r border-t-[#dddddd] border-r-[#888] font-['DejaVu_Sans_Mono','Liberation_Mono',monospace] text-[7px] leading-2">
		<div className="h-[11px] text-center border-b border-[#bbbbbb]">{title}</div>
		<div className="flex h-[76px]">
			<div className="flex-1 pl-[6px] pt-[9px] whitespace-pre">
				{lines.map((l, i) => <div key={i} className="h-2">{l}</div>)}
			</div>
			<div className="w-[154px] border-l border-black text-center whitespace-nowrap">
				<div className="h-[34px] border-b border-[#bbbbbb]">
					<div>Zemax</div>
					<div>Ansys Zemax OpticStudio 2023 R1.03</div>
				</div>
				<div className="pt-px">
					<div>Lens_710_BB_test_BB.ZMX</div>
					<div>Configuration 1 of 1</div>
				</div>
			</div>
		</div>
	</div>
)

type ViewProps = { title: string; icon: IconName; indent?: string; width: string; menu?: boolean; pad: string; inset: string; children: React.ReactNode }

const ViewPanel: React.FC<ViewProps> = ({ title, icon, indent, width, menu, pad, inset, children }) => (
	<section className="min-w-0 overflow-hidden flex flex-col bg-linear-to-b from-white to-[#dcdcdc]">
		<TabBar title={title} icon={icon} indent={indent} width={width} menu={menu} />
		<div className={clsx('flex items-center bg-[#fcfcfc] pt-[6px] pb-[3px] h-[38px] shrink-0 whitespace-nowrap', pad)}>
			<SettingsButton />
			<Sep />
			<ToolGroup list={['refresh', 'copy', 'save', 'print']} />
			<Sep />
			<ToolGroup list={['pencil', 'rect', 'arrow', 'line', 'text']} />
			<Sep />
			<ToolGroup list={['lock']} />
			<Sep />
			<ToolButton icon="fitWindow" active />
			<div className="flex pl-[3px] gap-[2px]"><ToolGroup list={['windows', 'stack']} /></div>
			<ToolSelect label="Size" value="3 x 4" className="w-[42px] ml-[5px]" />
			<div className="flex pl-1"><ToolGroup list={['clock']} /></div>
			<Sep />
			<ToolSelect label="Style" value="Standard" className="w-[71px] ml-[6px]" />
			<ToolSelect label="Scale" value="Automatic" className="w-[79px] ml-[9px]" />
			<div className="w-1 shrink-0"></div>
			<Sep />
			<ToolGroup list={['help']} />
		</div>
		<div className={clsx('flex-1 min-h-0 overflow-hidden flex flex-col bg-white', inset)}>{children}</div>
	</section>
)

const FftPanel: React.FC = () => (
	<ViewPanel title="3: FFT Line/Edge Spread" icon="fftTab" width="w-[239px]" menu pad="pl-[5px]" inset="ml-[3px] mr-[5px]">
		<div className="flex shrink-0">
			<svg viewBox="3 554 463 280" className="w-[463px] h-[280px] shrink-0" role="img" aria-label="Edge spread plot">
				<Plot
					x={64} y={576.5} w={386} h={215}
					xLabels={['-20.0', '-16.0', '-12.0', '-8.0', '-4.0', '0', '4.0', '8.0', '12.0', '16.0', '20.0']}
					yLabels={['1.0', '0.8', '0.6', '0.4', '0.2', '0']}
				>
					<path d={smooth(edgeCurve)} stroke="#0000ff" fill="none" />
					<g className="text-[8px]" textAnchor="middle">
						<text x="257.500" y="814">Y-Position in µm</text>
						<text transform="translate(34 684) rotate(-90)">Relative Irradiance</text>
					</g>
				</Plot>
			</svg>
			<Watermark />
		</div>
		<InfoBlock
			title="FFT Edge Spread Function"
			lines={['2/17/2025', 'Field          : 0.0000 mm', 'Wavelength     : 0.486133 µm', 'Linear X Edge Spread Function']}
		/>
	</ViewPanel>
)

const MtfPanel: React.FC = () => (
	<ViewPanel title="2: Geometric MTF" icon="mtfTab" indent="w-[2px]" width="w-[198px]" pad="pl-[7px]" inset="ml-[5px]">
		<div className="flex shrink-0">
			<svg viewBox="795 554 463 239" className="w-[463px] h-[239px] shrink-0" role="img" aria-label="MTF plot">
				<Plot
					x={855.5} y={576.5} w={386} h={166}
					xLabels={['0', '69.0', '138.0', '207.0', '276.0', '345.0', '414.0', '483.0', '552.0', '621.0', '690.0']}
					yLabels={['1.0', '0.5', '0']}
				>
					<text x="856" y="571" className="text-[7px]">Freq = 62.58, MTF = 0.03984</text>
					<svg x="855.500" y="576.500" width="386" height="167" viewBox="198 65 1157 500" preserveAspectRatio="none">
						{mtfCurves.map(([color, dotted, pts], i) => (
							<path key={i} d={smooth(pts)} stroke={color} strokeWidth="3" strokeDasharray={dotted ? '5 5' : undefined} fill="none" />
						))}
					</svg>
					<g className="text-[8px]" textAnchor="middle">
						<text x="1049" y="766">Spatial Frequency in cycles per mm</text>
						<text transform="translate(826 660) rotate(-90)">Modulation</text>
					</g>
				</Plot>
			</svg>
			<Watermark />
		</div>
		<Legend />
		<div className="h-[9px] shrink-0"></div>
		<InfoBlock
			title="Polychromatic Geometric MTF"
			lines={['2/17/2025', 'MTF for 0.4861 to 0.6563 µm.', '', 'Legend items refer to Field positions']}
		/>
	</ViewPanel>
)

const App: React.FC = () => (
	<main className="h-screen overflow-hidden flex flex-col gap-[6px] bg-[#808080] text-black text-[14px] leading-5 font-['Open_Sans','Noto_Sans',sans-serif]">
		<div className="grid grid-cols-[775fr_735fr] gap-[6px] shrink-0">
			<LensData />
			<LayoutPanel />
		</div>
		<div className="grid grid-cols-[784fr_726fr] gap-[6px] flex-1 min-h-0">
			<FftPanel />
			<MtfPanel />
		</div>
	</main>
)

export default App
